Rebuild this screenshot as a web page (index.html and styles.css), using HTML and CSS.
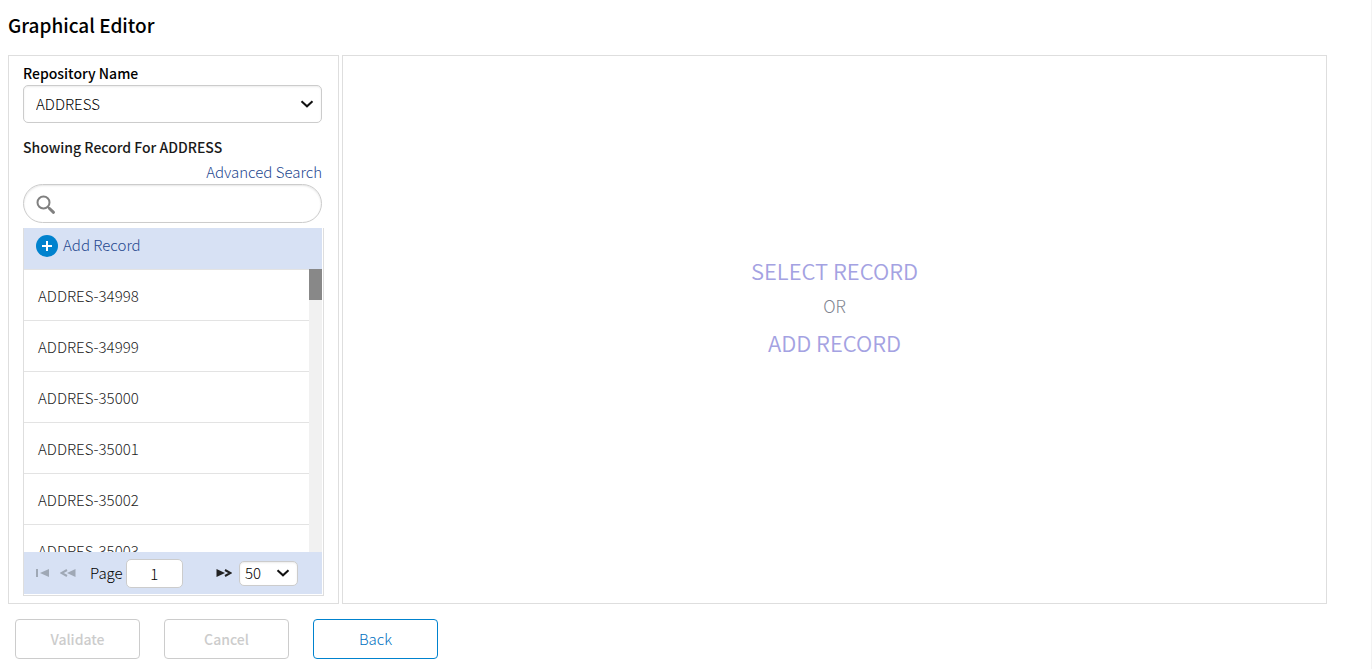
FILE: index.html
```
<!DOCTYPE html>
<html lang="en">

<head>
    <meta charset="UTF-8">
    <meta name="viewport" content="width=device-width, initial-scale=1.0">
    <title>Graphical Editor</title>
    <link rel="stylesheet" href="styles.css">
</head>

<body>
    <h1>Graphical Editor</h1>

    <main class="editor">
        <section class="sidebar">
            <label class="label" for="repository">Repository Name</label>
            <div class="select-box">
                <select id="repository">
                    <option>ADDRESS</option>
                </select>
                <svg class="chevron" viewBox="0 0 14 8"><path d="M1.5 1.2 7 6.3l5.5-5.1"/></svg>
            </div>

            <label class="label showing" for="search">Showing Record For ADDRESS</label>
            <a class="advanced" href="#">Advanced Search</a>
            <div class="search-box">
                <svg class="search-icon" viewBox="0 0 20 20"><circle cx="7.5" cy="7.5" r="6"/><path d="M12 12l1.5 1.5"/><path class="handle" d="M13.5 13.5l4 3.8"/></svg>
                <input type="text" id="search">
            </div>

            <div class="records">
                <a class="add-record" href="#">
                    <svg class="plus" viewBox="0 0 22 22"><circle cx="11" cy="11" r="11"/><path d="M11 6v10M6 11h10"/></svg>
                    Add Record
                </a>
                <div class="list-wrap">
                    <ul class="record-list">
                        <li>ADDRES-34998</li>
                        <li>ADDRES-34999</li>
                        <li>ADDRES-35000</li>
                        <li>ADDRES-35001</li>
                        <li>ADDRES-35002</li>
                        <li>ADDRES-35003</li>
                    </ul>
                    <div class="track"><div class="thumb"></div></div>
                </div>
                <div class="pager">
                    <button type="button" class="icon-btn" aria-label="First page" disabled>
                        <svg viewBox="0 0 16 10"><path class="line" d="M3 1v8"/><path class="solid" d="M15 1v8L6 5z"/></svg>
                    </button>
                    <button type="button" class="icon-btn" aria-label="Previous page" disabled>
                        <svg viewBox="0 0 16 10"><path class="line" d="M7 2 1.5 5 7 8"/><path class="solid" d="M15.5 1v8L7 5z"/></svg>
                    </button>
                    <label for="page">Page</label>
                    <input type="text" id="page" value="1">
                    <button type="button" class="icon-btn next" aria-label="Next page">
                        <svg viewBox="0 0 16 10"><path class="solid" d="M.5 1v8L9 5z"/><path class="line" d="M9 2l5.5 3L9 8"/></svg>
                    </button>
                    <div class="select-box page-size">
                        <select id="pageSize" aria-label="Records per page">
                            <option>50</option>
                        </select>
                        <svg class="chevron" viewBox="0 0 14 8"><path d="M1.5 1.2 7 6.3l5.5-5.1"/></svg>
                    </div>
                </div>
            </div>
        </section>

        <section class="canvas">
            <a href="#">SELECT RECORD</a>
            <span>OR</span>
            <a href="#">ADD RECORD</a>
        </section>
    </main>

    <div class="actions">
        <button type="button" disabled>Validate</button>
        <button type="button" disabled>Cancel</button>
        <button type="button" class="back">Back</button>
    </div>
</body>

</html>
```
FILE: styles.css
```
* {
    box-sizing: border-box;
}

body {
    margin: 0;
    padding: 8px 44px 8px 8px;
    min-height: 100vh;
    border-right: 1px solid #f3f3f3;
    background: #fff;
    color: #000;
    font-family: "Noto Sans CJK SC", "Open Sans", sans-serif;
    font-size: 15px;
    font-weight: 300;
    line-height: 20px;
}

a {
    color: #24478f;
    text-decoration: none;
}

input, select, button {
    font: inherit;
    color: inherit;
}

h1 {
    margin: 0 0 13px;
    font-size: 19px;
    font-weight: 500;
    line-height: 34px;
}

.editor {
    display: flex;
    gap: 3px;
}

.sidebar {
    display: flex;
    flex-direction: column;
    flex: 0 0 331px;
    padding: 7px 14px;
    border: 1px solid #dedede;
}

.label {
    font-size: 14px;
    font-weight: 500;
    line-height: 20px;
    margin-bottom: 2px;
}

.showing {
    margin: 14px 0 5px;
    color: #1a1a1a;
}

.select-box {
    position: relative;
    width: 299px;
    height: 38px;
}

.select-box select {
    appearance: none;
    width: 100%;
    height: 100%;
    padding: 0 12px;
    border: 1px solid #ccc;
    border-radius: 5px;
    background: #fff;
    box-shadow: inset 0 1px 2px rgba(0, 0, 0, 0.08);
}

.chevron {
    position: absolute;
    right: 8px;
    top: 50%;
    width: 14px;
    height: 8px;
    margin-top: -4px;
    fill: none;
    stroke: #111;
    stroke-width: 2;
    pointer-events: none;
}

.advanced {
    width: 299px;
    text-align: right;
}

.search-box {
    display: flex;
    align-items: center;
    width: 299px;
    height: 39px;
    margin: 2px 0 5px;
    padding: 2px 12px 0;
    border: 1px solid #ccc;
    border-radius: 20px;
    box-shadow: inset 0 1px 2px rgba(0, 0, 0, 0.1);
}

.search-box input {
    flex: 1;
    min-width: 0;
    border: 0;
    outline: 0;
    background: none;
}

.search-icon {
    width: 20px;
    height: 20px;
    fill: none;
    stroke: #808080;
    stroke-width: 2;
}

.search-icon .handle {
    stroke-width: 3;
    stroke-linecap: round;
}

.records {
    width: 301px;
    padding: 0 1px 1px 0;
    border: 1px solid #dedede;
    border-top: 0;
}

.add-record {
    display: flex;
    align-items: center;
    gap: 5px;
    height: 41px;
    padding: 0 12px 8px;
    background: #d7e1f4;
}

.plus {
    width: 22px;
    height: 22px;
    margin-top: 2px;
    fill: #0082ce;
    stroke: none;
}

.plus path {
    stroke: #fff;
    stroke-width: 2;
}

.list-wrap {
    display: flex;
    height: 283px;
}

.record-list {
    flex: 1;
    margin: 0;
    padding: 0;
    overflow: hidden;
    list-style: none;
    color: #222;
}

.record-list li {
    height: 51px;
    padding-left: 14px;
    border-top: 1px solid #e3e3e3;
    line-height: 52px;
}

.track {
    width: 13px;
    background: #f1f1f1;
}

.thumb {
    height: 31px;
    background: #888;
}

.pager {
    display: flex;
    align-items: center;
    height: 42px;
    padding: 0 24px 0 10px;
    background: #d7e1f4;
}

.icon-btn {
    display: flex;
    margin-right: 10px;
    padding: 0;
    border: 0;
    background: none;
    color: #222;
}

.icon-btn:disabled {
    color: #9fa8b5;
}

.icon-btn svg {
    width: 16px;
    height: 10px;
}

.icon-btn .solid {
    fill: currentColor;
}

.icon-btn .line {
    fill: none;
    stroke: currentColor;
    stroke-width: 2;
}

.pager label {
    margin: 0 3px 0 4px;
}

.pager input {
    width: 57px;
    height: 29px;
    padding: 0;
    border: 1px solid #ccc;
    border-radius: 5px;
    background: #fff;
    text-align: center;
}

.icon-btn.next {
    margin: 0 7px 0 auto;
}

.page-size {
    width: 59px;
    height: 25px;
}

.page-size select {
    padding: 0 5px;
}

.canvas {
    display: flex;
    flex: 1;
    flex-direction: column;
    align-items: center;
    justify-content: center;
    padding-bottom: 47px;
    border: 1px solid #dedede;
    color: #7f8590;
    font-size: 17px;
    line-height: 36px;
}

.canvas a {
    color: #a4a2e2;
    font-size: 22px;
    font-weight: 350;
}

.actions {
    display: flex;
    gap: 24px;
    margin: 15px 0 0 7px;
}

.actions button {
    width: 125px;
    height: 40px;
    border: 1px solid #ccc;
    border-radius: 4px;
    background: #fff;
    color: #ccc;
    font-size: 14px;
    font-weight: 500;
}

.actions .back {
    border-color: #0082ce;
    color: #0070c0;
    font-size: 15px;
    font-weight: 300;
}
```
